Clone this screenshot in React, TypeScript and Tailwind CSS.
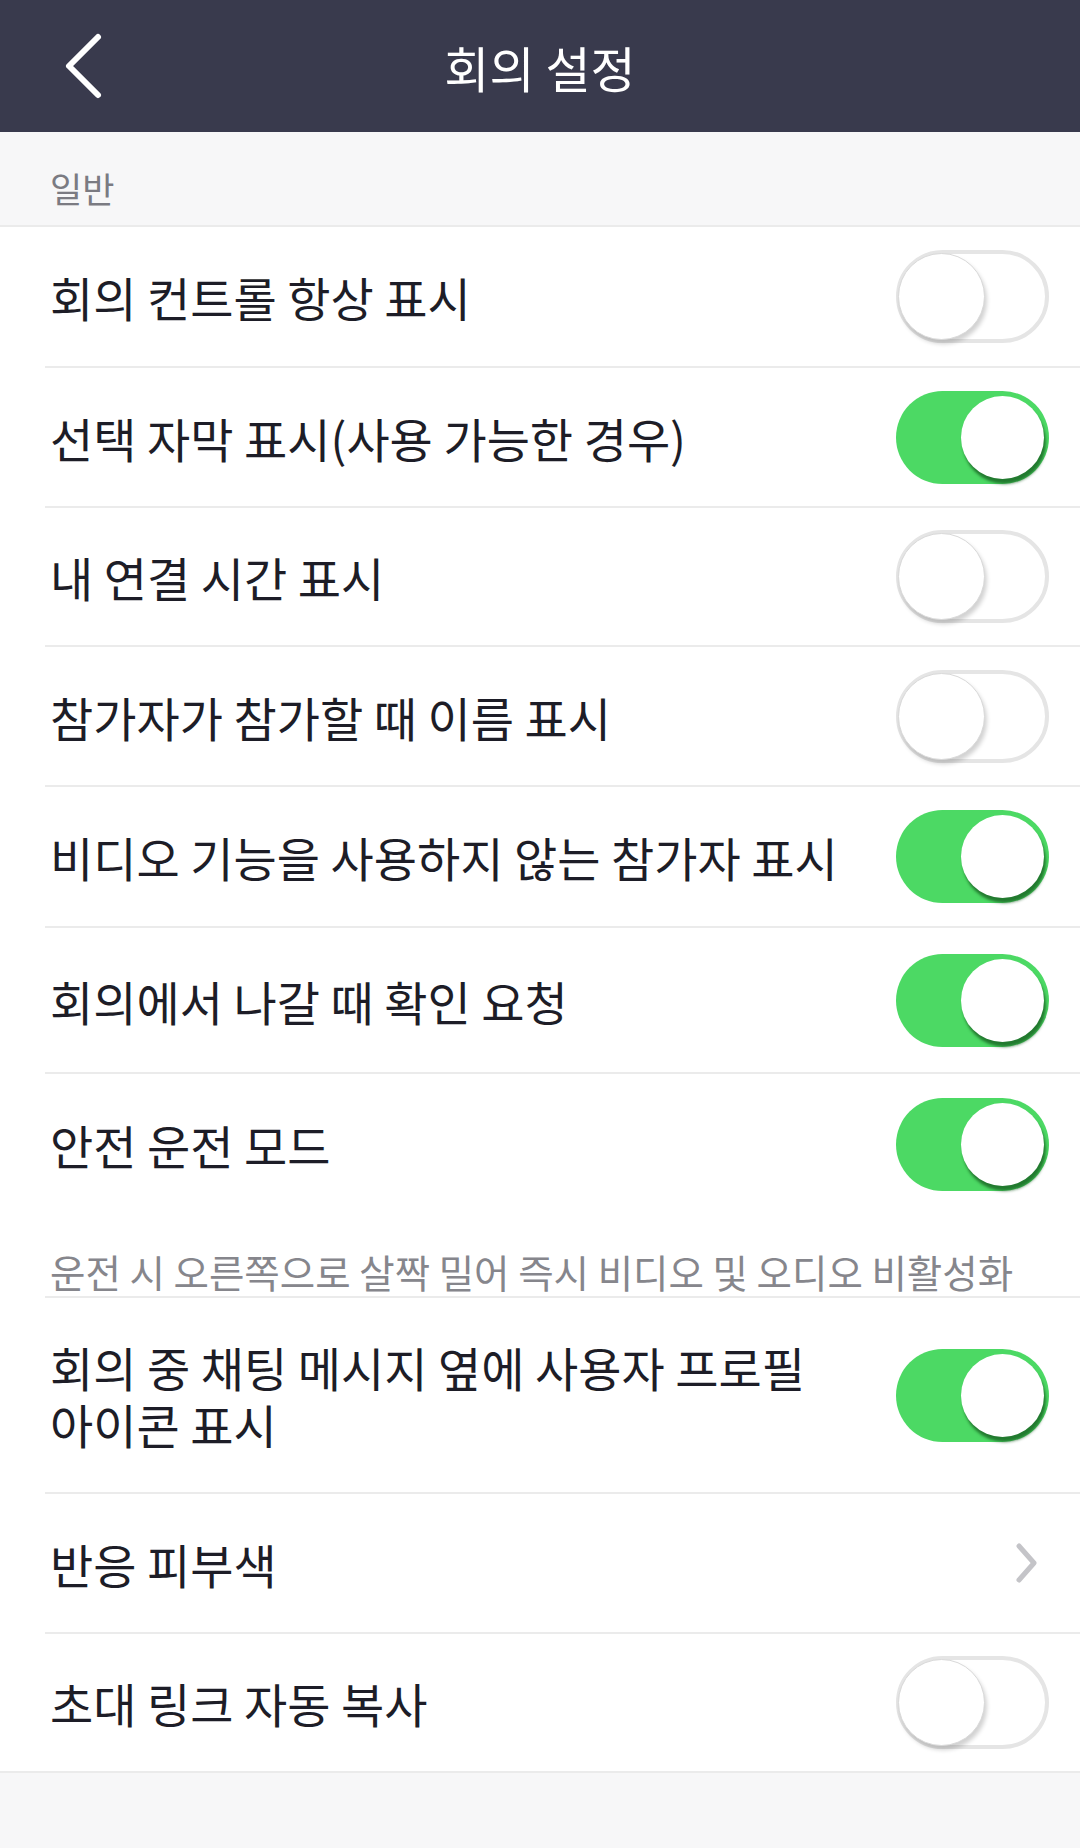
import React from 'react';

const FONT = { fontFamily: '"Noto Sans CJK KR", "Noto Sans", sans-serif' };

type Row = { label: string; on?: boolean; chevron?: boolean; h: string; note?: string };

const rows: Row[] = [
  { label: '회의 컨트롤 항상 표시', on: false, h: 'h-[139px]' },
  { label: '선택 자막 표시(사용 가능한 경우)', on: true, h: 'h-[138px]' },
  { label: '내 연결 시간 표시', on: false, h: 'h-[137px]' },
  { label: '참가자가 참가할 때 이름 표시', on: false, h: 'h-[138px]' },
  { label: '비디오 기능을 사용하지 않는 참가자 표시', on: true, h: 'h-[139px]' },
  { label: '회의에서 나갈 때 확인 요청', on: true, h: 'h-[144px]' },
  {
    label: '안전 운전 모드',
    on: true,
    h: 'h-[141px]',
    note: '운전 시 오른쪽으로 살짝 밀어 즉시 비디오 및 오디오 비활성화',
  },
  { label: '회의 중 채팅 메시지 옆에 사용자 프로필 아이콘 표시', on: true, h: 'h-[194px]' },
  { label: '반응 피부색', chevron: true, h: 'h-[138px]' },
  { label: '초대 링크 자동 복사', on: false, h: 'h-[137px]' },
];

const Toggle = ({ on }: { on: boolean }) =>
  on ? (
    <div className="w-[153px] h-[93px] rounded-full bg-[#4cd964] flex items-center justify-end pr-[5px] shrink-0">
      <div className="w-[83px] h-[83px] rounded-full bg-white shadow-[2px_5px_3px_rgba(20,90,30,0.75)]" />
    </div>
  ) : (
    <div className="w-[153px] h-[93px] rounded-full bg-white border-[4px] border-[#e5e5e5] flex items-center justify-start shrink-0">
      <div className="w-[87px] h-[87px] -ml-[2px] rounded-full bg-white border border-[#d9d9d9] shadow-[2px_4px_4px_rgba(0,0,0,0.18)]" />
    </div>
  );

export default function App() {
  return (
    <div className="w-[1080px] h-[1848px] bg-[#f7f7f8] flex flex-col" style={FONT}>
      <div className="h-[132px] bg-[#393a4d] flex items-center relative shrink-0">
        <svg className="absolute left-[60px] top-[32px]" width="46" height="68" viewBox="0 0 46 68" fill="none">
          <path d="M38 5 L9 34 L38 63" stroke="white" strokeWidth="6" strokeLinecap="round" strokeLinejoin="round" />
        </svg>
        <h1 className="w-full text-center text-white text-[49px] leading-none">회의 설정</h1>
      </div>

      <div className="h-[95px] border-b-2 border-[#ebebeb] flex items-center pl-[50px] pt-[18px] shrink-0">
        <span className="text-[35px] text-[#7b7b82] leading-none">일반</span>
      </div>

      <div className="bg-white border-b-2 border-[#ebebeb] flex flex-col">
        {rows.map((r, i) => (
          <div key={i} className={i < rows.length - 1 ? 'pl-[45px]' : ''}>
            <div className={`${r.h} flex items-center justify-between pr-[31px] ${i < rows.length - 1 ? 'pl-[5px]' : 'pl-[50px]'}`}>
              <span className="text-[47px] text-[#1d1d27] leading-[57px] max-w-[800px] break-keep">{r.label}</span>
              {r.chevron ? (
                <svg width="24" height="40" viewBox="0 0 24 40" fill="none" className="mr-[10px]">
                  <path d="M4 3 L19 20 L4 37" stroke="#c4c4c8" strokeWidth="5" strokeLinecap="round" strokeLinejoin="round" />
                </svg>
              ) : (
                <Toggle on={!!r.on} />
              )}
            </div>
            {r.note && (
              <div className="h-[81px] -ml-[45px] pl-[50px] flex items-center pt-[32px]">
                <span className="text-[38.5px] text-[#86868c] leading-none whitespace-nowrap">{r.note}</span>
              </div>
            )}
            {i < rows.length - 1 && <div className="h-[2px] bg-[#ebebeb]" />}
          </div>
        ))}
      </div>
    </div>
  );
}
